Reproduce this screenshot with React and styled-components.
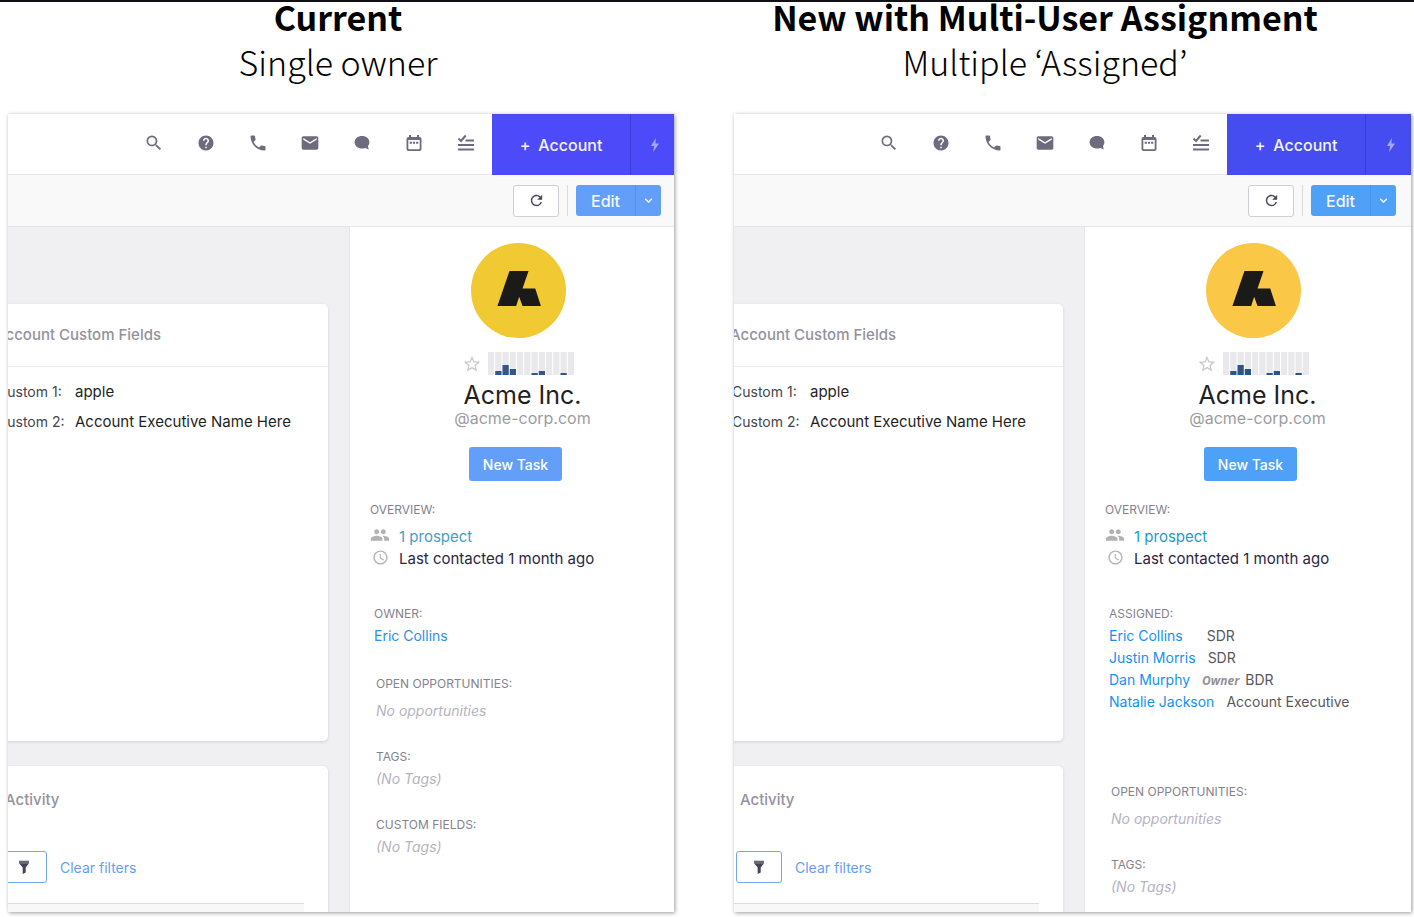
import React from 'react';
import styled, { createGlobalStyle, ThemeProvider } from 'styled-components';
import {
  MdSearch,
  MdHelp,
  MdPhone,
  MdEmail,
  MdRefresh,
  MdPeople,
  MdAccessTime,
  MdStarBorder,
  MdKeyboardArrowDown,
} from 'react-icons/md';

const GlobalStyle = createGlobalStyle`
  * {
    box-sizing: border-box;
  }

  body {
    margin: 0;
    background: #fff;
    font-family: Inter, "Liberation Sans", sans-serif;
    font-size: 14px;
    line-height: 22px;
    color: #1f1f24;
  }

  button {
    font-family: inherit;
    padding: 0;
    border: none;
    cursor: pointer;
  }

  h1, h2, h3, p, dl, dd, ul {
    margin: 0;
    padding: 0;
    font-weight: 400;
  }
`;

// Each side of the comparison has its own slightly different palette
const currentTheme = {
  primary: '#4d4af9',
  action: '#639ff9',
  actionLine: '#5791ee',
  logo: '#f1c933',
  bar: '#35568c',
  prospect: '#4a9cc4',
  name: '#2f8fe8',
  bleed: 0,
};

const newTheme = {
  primary: '#464df0',
  action: '#4fa1f7',
  actionLine: '#4593ea',
  logo: '#fac746',
  bar: '#295687',
  prospect: '#1f9bc2',
  name: '#1492f0',
  bleed: 2,
};

const Page = styled.main`
  display: grid;
  grid-template-columns: 676fr 738fr;
  height: 100vh;
  border-top: 2px solid #111014;
`;

const Side = styled.section`
  display: flex;
  flex-direction: column;
  min-width: 0;
  min-height: 0;
`;

const Heading = styled.header`
  height: 112px;
  flex-shrink: 0;
  text-align: center;
  color: #000;
  white-space: nowrap;
  font-family: "Noto Sans CJK KR", "Noto Sans", sans-serif;
`;

const Title = styled.h1`
  font-size: 34px;
  line-height: 30px;
  font-weight: 700;
`;

const Subtitle = styled.p`
  font-size: 34px;
  line-height: 60px;
  font-weight: 300;
`;

const Panel = styled.div`
  flex: 1;
  min-height: 0;
  display: flex;
  flex-direction: column;
  margin: ${(props) => props.$margin};
  background: #fff;
  overflow: hidden;
  box-shadow: 1px 1px 4px rgba(0, 0, 0, 0.4);
`;

const Toolbar = styled.nav`
  display: flex;
  justify-content: flex-end;
  flex-shrink: 0;
  height: 61px;
`;

const Tools = styled.div`
  flex: 1;
  display: flex;
  justify-content: flex-end;
  border-bottom: 1px solid #e6e6ea;
`;

const Tool = styled.button`
  width: 52px;
  height: 58px;
  display: flex;
  align-items: center;
  justify-content: center;
  background: none;
  color: #6f6a7e;
`;

const AddAccount = styled.button`
  width: 138px;
  display: flex;
  align-items: center;
  justify-content: center;
  gap: 8px;
  background: ${(props) => props.theme.primary};
  color: #f3f3ff;
  font-size: 16px;
  font-weight: 500;
`;

const Bolt = styled.button`
  width: ${(props) => 44 + props.theme.bleed}px;
  padding-left: 4px;
  display: flex;
  align-items: center;
  justify-content: center;
  background: ${(props) => props.theme.primary};
  border-left: 1px solid #3d3bd8;
  color: #a5a4fb;
`;

const ActionBar = styled.div`
  display: flex;
  align-items: center;
  justify-content: flex-end;
  flex-shrink: 0;
  height: 52px;
  padding-right: ${(props) => 13 + props.theme.bleed}px;
  background: #f9f9f9;
  border-bottom: 1px solid #e6e6ea;
`;

const RefreshButton = styled.button`
  width: 46px;
  height: 32px;
  display: flex;
  align-items: center;
  justify-content: center;
  background: #fff;
  border: 1px solid #cfcfd8;
  border-radius: 3px;
  color: #4a4658;
`;

const Divider = styled.span`
  width: 1px;
  height: 31px;
  margin: 0 8px;
  background: #dadade;
`;

const SplitButton = styled.div`
  display: flex;
  height: 31px;
  border-radius: 3px;
  overflow: hidden;
`;

const EditButton = styled.button`
  width: 59px;
  background: ${(props) => props.theme.action};
  color: #f5f9ff;
  font-size: 16px;
  font-weight: 500;
`;

const EditMenuButton = styled.button`
  width: 26px;
  display: flex;
  align-items: center;
  justify-content: center;
  background: ${(props) => props.theme.action};
  border-left: 1px solid ${(props) => props.theme.actionLine};
  color: #fff;
`;

const Content = styled.div`
  flex: 1;
  min-height: 0;
  display: flex;
`;

const Main = styled.div`
  flex: 1;
  min-width: 0;
  display: flex;
  flex-direction: column;
  align-items: flex-end;
  gap: 25px;
  padding: 77px 21px 0 0;
  background: #f0f0f3;
  overflow: hidden;
`;

// Cards run under the left edge of the panel
const Card = styled.article`
  width: 100%;
  min-width: 360px;
  flex-shrink: 0;
  background: #fff;
  border-radius: 5px;
  box-shadow: 0 1px 3px rgba(40, 40, 70, 0.16);
`;

const FieldsCard = styled(Card)`
  height: 437px;
`;

const ActivityCard = styled(Card)`
  height: 200px;
`;

const CardTitle = styled.h2`
  padding: 20px 27px;
  font-size: 15px;
  font-weight: 500;
  color: #94919e;
`;

const FieldsTitle = styled(CardTitle)`
  border-bottom: 1px solid #ececef;
`;

const Fields = styled.dl`
  display: grid;
  grid-template-columns: 78px 1fr;
  row-gap: 8px;
  padding: 14px 0 0 29px;
  font-size: 15px;
  white-space: nowrap;

  dt {
    font-size: 14px;
    color: #45454d;
  }
`;

const ActivityTitle = styled(CardTitle)`
  padding: 23px 37px;
`;

const Filters = styled.div`
  display: flex;
  align-items: center;
  gap: 13px;
  padding: 17px 33px 0;
`;

const FilterButton = styled.button`
  width: 46px;
  height: 32px;
  display: flex;
  align-items: center;
  justify-content: center;
  background: #fff;
  border: 1px solid #6fa6f5;
  border-radius: 3px;
  color: #454158;
`;

const ClearFilters = styled.button`
  background: none;
  color: #639ff9;
  font-size: 14px;
`;

const Results = styled.div`
  height: 60px;
  margin: 20px 24px 0 0;
  border-top: 1px solid #dcdce0;
  background: #f8f8f9;
`;

const Sidebar = styled.aside`
  width: ${(props) => 325 + props.theme.bleed}px;
  flex-shrink: 0;
  padding: 16px ${(props) => props.theme.bleed}px 0 0;
  border-left: 1px solid #e6e6ea;
  background: #fff;
  white-space: nowrap;
`;

const Profile = styled.div`
  display: flex;
  flex-direction: column;
  align-items: center;
  padding-left: 13px;
`;

const Rating = styled.div`
  display: flex;
  align-items: center;
  gap: 6px;
  margin-top: 14px;
`;

const StarButton = styled.button`
  display: flex;
  background: none;
  color: #c9c9d2;
`;

const Identity = styled.div`
  padding-left: 8px;
  text-align: center;
`;

const CompanyName = styled.h2`
  padding-top: 5px;
  font-size: 25px;
  line-height: 30px;
`;

const Handle = styled.p`
  font-size: 16px;
  line-height: 16px;
  color: #9c9c9f;
`;

const NewTask = styled.button`
  width: 93px;
  height: 34px;
  margin: 21px 6px 0 0;
  border-radius: 3px;
  background: ${(props) => props.theme.action};
  color: #fff;
  font-size: 14px;
  font-weight: 500;
`;

const Group = styled.section`
  padding: 0 0 ${(props) => props.$space || 24}px ${(props) => props.$indent || 26}px;
`;

const Label = styled.h3`
  margin-bottom: ${(props) => props.$gap || 0}px;
  font-size: 12px;
  line-height: 22px;
  color: #85828d;
`;

const Overview = styled.section`
  padding: 18px 0 33px 20px;
`;

const Fact = styled.p`
  display: grid;
  grid-template-columns: 20px 1fr;
  align-items: center;
  column-gap: 9px;
  font-size: 15px;
  color: #2b2642;

  svg {
    justify-self: center;
    margin-bottom: 3px;
    color: #b2b2b5;
  }
`;

const ProspectLink = styled.a`
  color: ${(props) => props.theme.prospect};
  text-decoration: none;
`;

const People = styled.ul`
  list-style: none;
`;

const Person = styled.li`
  display: flex;
  align-items: center;
  gap: ${(props) => (props.$wide ? 24 : 12)}px;
  height: 22px;
`;

const PersonLink = styled.a`
  color: ${(props) => props.theme.name};
  text-decoration: none;
`;

const Role = styled.span`
  color: #58585c;
`;

const OwnerMark = styled.em`
  margin-right: 6px;
  font-family: "Open Sans", sans-serif;
  font-size: 12px;
  line-height: 12px;
  font-weight: 700;
  color: #929296;
`;

const Empty = styled.p`
  font-style: italic;
  color: #b5b3c0;
`;

const ChatIcon = () => (
  <svg width="16" height="16" viewBox="0 0 16 16" fill="currentColor">
    <path d="M8 1C3.700 1 .6 3.700 .6 7.300s3.200 6.300 7.400 6.300c1.200 0 2.300-.2 3.300-.6l3.500 1.600-.9-3.400c.9-1.100 1.500-2.400 1.500-3.900C15.400 3.700 12.300 1 8 1z" />
  </svg>
);

const CalendarIcon = () => (
  <svg width="16" height="18" viewBox="0 0 16 18" fill="currentColor">
    <path
      fillRule="evenodd"
      d="M3 1h2v2h6V1h2v2h.5A2 2 0 0 1 15.500 5v10a2 2 0 0 1-2 2h-11a2 2 0 0 1-2-2V5a2 2 0 0 1 2-2H3zM2.300 6v8.500c0 .4.300.7.700.7h10c.4 0 .7-.3.700-.7V6z"
    />
    <path d="M3.700 7.700h2.200v2H3.700zM6.900 7.700h2.200v2H6.900zM10.100 7.700h2.200v2h-2.200z" />
  </svg>
);

const TasksIcon = () => (
  <svg width="18" height="18" viewBox="0 0 18 18" fill="none" stroke="currentColor" strokeWidth="2">
    <path d="M1.500 4.500l2.500 2.500L8.700 1.500M8.500 6.500h8.500M1 11h16M1 15.500h16" />
  </svg>
);

const BoltIcon = () => (
  <svg width="10" height="16" viewBox="0 0 10 16" fill="currentColor">
    <path d="M5.800 1L1 9h3l-.7 6L9 6.500H5.500z" />
  </svg>
);

const FilterIcon = () => (
  <svg width="12" height="14" viewBox="0 0 12 14" fill="currentColor">
    <path d="M1 .7h10v2.600H1z" opacity=".8" />
    <path d="M1 3.300h10L7.700 7.600V12.500L4.700 14V7.600z" />
  </svg>
);

const Logo = ({ color }) => (
  <svg width="95" height="95" viewBox="0 0 284 284" role="img" aria-label="Acme Inc.">
    <circle cx="142" cy="142" r="142" fill={color} />
    <path d="M115 84h57l-18 52h38l17 52h-55l-10-27-9 27H79z" fill="#1a1a18" />
  </svg>
);

const activity = [0, 4, 10, 6, 0, 0, 2, 4, 0, 0, 2, 0];

const ActivityChart = ({ color }) => (
  <svg width="87" height="23" viewBox="0 0 87 23">
    {activity.map((value, i) => (
      <g key={i}>
        <rect x={i * 7.25} y="0" width="6.25" height="23" fill="#e9e9eb" />
        <rect x={i * 7.25} y={23 - value} width="6.25" height={value} fill={color} />
      </g>
    ))}
  </svg>
);

const tools = [
  { label: 'Search', icon: <MdSearch size={20} /> },
  { label: 'Help', icon: <MdHelp size={18} /> },
  { label: 'Calls', icon: <MdPhone size={20} /> },
  { label: 'Email', icon: <MdEmail size={20} /> },
  { label: 'Chat', icon: <ChatIcon /> },
  { label: 'Calendar', icon: <CalendarIcon /> },
  { label: 'Tasks', icon: <TasksIcon /> },
];

const EmptyGroup = ({ title, text, gap }) => (
  <Group>
    <Label $gap={gap}>{title}</Label>
    <Empty>{text}</Empty>
  </Group>
);

const AccountPanel = ({ theme, margin, children }) => (
  <ThemeProvider theme={theme}>
    <Panel $margin={margin}>
      <Toolbar>
        <Tools>
          {tools.map((tool) => (
            <Tool key={tool.label} aria-label={tool.label}>{tool.icon}</Tool>
          ))}
        </Tools>
        <AddAccount>
          <span>+</span>
          <span>Account</span>
        </AddAccount>
        <Bolt aria-label="Quick actions"><BoltIcon /></Bolt>
      </Toolbar>

      <ActionBar>
        <RefreshButton aria-label="Refresh"><MdRefresh size={17} /></RefreshButton>
        <Divider />
        <SplitButton>
          <EditButton>Edit</EditButton>
          <EditMenuButton aria-label="More edit options"><MdKeyboardArrowDown size={15} /></EditMenuButton>
        </SplitButton>
      </ActionBar>

      <Content>
        <Main>
          <FieldsCard>
            <FieldsTitle>Account Custom Fields</FieldsTitle>
            <Fields>
              <dt>Custom 1:</dt>
              <dd>apple</dd>
              <dt>Custom 2:</dt>
              <dd>Account Executive Name Here</dd>
            </Fields>
          </FieldsCard>
          <ActivityCard>
            <ActivityTitle>Activity</ActivityTitle>
            <Filters>
              <FilterButton aria-label="Filter"><FilterIcon /></FilterButton>
              <ClearFilters>Clear filters</ClearFilters>
            </Filters>
            <Results />
          </ActivityCard>
        </Main>

        <Sidebar>
          <Profile>
            <Logo color={theme.logo} />
            <Rating>
              <StarButton aria-label="Favourite"><MdStarBorder size={20} /></StarButton>
              <ActivityChart color={theme.bar} />
            </Rating>
            <Identity>
              <CompanyName>Acme Inc.</CompanyName>
              <Handle>@acme-corp.com</Handle>
            </Identity>
            <NewTask>New Task</NewTask>
          </Profile>

          <Overview>
            <Label $gap={4}>OVERVIEW:</Label>
            <Fact>
              <MdPeople size={20} />
              <ProspectLink href="#prospects">1 prospect</ProspectLink>
            </Fact>
            <Fact>
              <MdAccessTime size={17} />
              <span>Last contacted 1 month ago</span>
            </Fact>
          </Overview>
          {children}
        </Sidebar>
      </Content>
    </Panel>
  </ThemeProvider>
);

const assigned = [
  { name: 'Eric Collins', role: 'SDR', wide: true },
  { name: 'Justin Morris', role: 'SDR' },
  { name: 'Dan Murphy', role: 'BDR', owner: true },
  { name: 'Natalie Jackson', role: 'Account Executive' },
];

const App = () => (
  <>
    <GlobalStyle />
    <Page>
      <Side>
        <Heading>
          <Title>Current</Title>
          <Subtitle>Single owner</Subtitle>
        </Heading>
        <AccountPanel theme={currentTheme} margin="0 2px 5px 8px">
          <Group $indent={24} $space={26}>
            <Label>OWNER:</Label>
            <PersonLink href="#eric-collins">Eric Collins</PersonLink>
          </Group>
          <EmptyGroup title="OPEN OPPORTUNITIES:" text="No opportunities" gap={5} />
          <EmptyGroup title="TAGS:" text="(No Tags)" />
          <EmptyGroup title="CUSTOM FIELDS:" text="(No Tags)" />
        </AccountPanel>
      </Side>

      <Side>
        <Heading>
          <Title>New with Multi-User Assignment</Title>
          <Subtitle>Multiple ‘Assigned’</Subtitle>
        </Heading>
        <AccountPanel theme={newTheme} margin="0 3px 5px 58px">
          <Group $indent={24} $space={68}>
            <Label>ASSIGNED:</Label>
            <People>
              {assigned.map((person) => (
                <Person key={person.name} $wide={person.wide}>
                  <PersonLink href="#person">{person.name}</PersonLink>
                  <Role>
                    {person.owner && <OwnerMark>Owner</OwnerMark>}
                    {person.role}
                  </Role>
                </Person>
              ))}
            </People>
          </Group>
          <EmptyGroup title="OPEN OPPORTUNITIES:" text="No opportunities" gap={5} />
          <EmptyGroup title="TAGS:" text="(No Tags)" />
        </AccountPanel>
      </Side>
    </Page>
  </>
);

export default App;
